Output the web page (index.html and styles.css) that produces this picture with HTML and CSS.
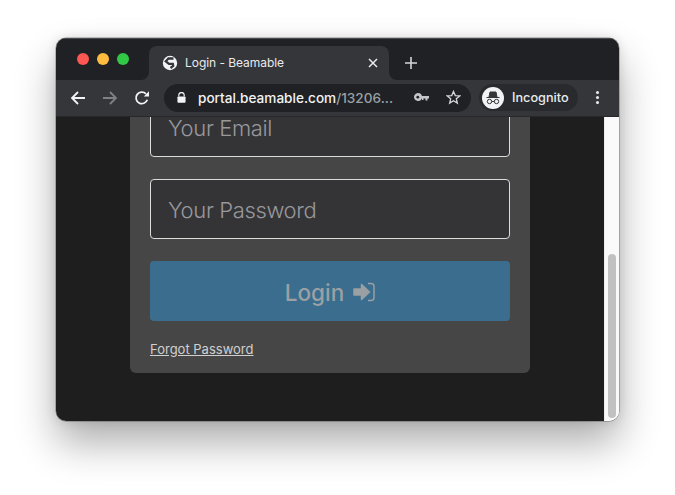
FILE: index.html
```html
<!DOCTYPE html>
<html lang="en">
<head>
<meta charset="utf-8">
<title>Login - Beamable</title>
<link rel="stylesheet" href="styles.css">
</head>
<body>
<div class="window">
  <div class="titlebar">
    <div class="traffic">
      <span class="light red"></span><span class="light yellow"></span><span class="light green"></span>
    </div>
    <div class="tab">
      <svg class="globe" viewBox="0 0 16 16" width="16" height="16"><circle cx="8" cy="8" r="7.200" fill="#f1f3f4"/><path d="M11.500 3.500H6.500L3.800 6.300 7 8.800H10.800L11.200 10.800 8.500 13" stroke="#35363a" stroke-width="2.300" fill="none"/></svg>
      <span class="tab-title">Login - Beamable</span>
      <svg class="tab-close" viewBox="0 0 10 10" width="10" height="10"><path d="M1 1l8 8M9 1l-8 8" stroke="#e8eaed" stroke-width="1.500" fill="none"/></svg>
    </div>
    <svg class="new-tab" viewBox="0 0 12 12" width="12" height="12"><path d="M6 0v12M0 6h12" stroke="#d4d6d9" stroke-width="1.600" fill="none"/></svg>
  </div>
  <div class="toolbar">
    <svg class="nav" viewBox="0 0 16 16" width="16" height="16"><path d="M15 8H2M8 2 2 8l6 6" stroke="#f1f3f4" stroke-width="1.800" fill="none"/></svg>
    <svg class="nav dim" viewBox="0 0 16 16" width="16" height="16"><path d="M1 8h13M8 2l6 6-6 6" stroke="#7f8184" stroke-width="1.800" fill="none"/></svg>
    <svg class="nav" viewBox="0 0 16 16" width="16" height="16"><path d="M13.300 9.800A5.800 5.800 0 1 1 12 3.800" stroke="#f1f3f4" stroke-width="1.800" fill="none"/><path d="M9.800 6.500H15V1.300z" fill="#f1f3f4"/></svg>
    <div class="omnibox">
      <svg class="lock" viewBox="0 0 10 12" width="9" height="11"><path d="M2 5V3.500a3 3 0 0 1 6 0V5" stroke="#f1f3f4" stroke-width="1.300" fill="none"/><rect x="0.500" y="4.800" width="9" height="7" rx="1" fill="#f1f3f4"/></svg>
      <span class="url"><span class="host">portal.beamable.com</span><span class="path">/13206...</span></span>
      <svg class="key" viewBox="0 0 15 9" width="15" height="9"><path d="M4 0a4 4 0 1 1-3.800 5.200 4 4 0 0 1 3.800-5.200zM7 3h8v2.500h-1.500V7.500h-2V5.500H9.500V7H8V5.500H7z" fill="#c4c6c9"/><circle cx="3.800" cy="4.200" r="1.400" fill="#202124"/></svg>
      <svg class="star" viewBox="0 0 16 16" width="15" height="15"><path d="M8 1.500l1.900 4.400 4.700.4-3.600 3.100 1.100 4.600L8 11.500 3.900 14l1.100-4.600L1.400 6.300l4.700-.4z" stroke="#d4d6d9" stroke-width="1.400" fill="none"/></svg>
    </div>
    <div class="profile">
      <span class="avatar">
        <svg viewBox="0 0 20 20" width="20" height="20"><path d="M3.500 9.500h13M6 9l1-5h6l1 5z" stroke="#35363a" stroke-width="1" fill="#35363a"/><circle cx="6.500" cy="13.500" r="2.200" stroke="#35363a" stroke-width="1" fill="none"/><circle cx="13.500" cy="13.500" r="2.200" stroke="#35363a" stroke-width="1" fill="none"/><path d="M8.700 13.500h2.600" stroke="#35363a" stroke-width="1"/></svg>
      </span>
      <span class="profile-name">Incognito</span>
    </div>
    <span class="menu"><i></i><i></i><i></i></span>
  </div>
  <div class="content">
    <main class="page">
      <form class="card">
        <div class="field"><span class="placeholder">Your Email</span></div>
        <div class="field"><span class="placeholder">Your Password</span></div>
        <div class="login">
          <span>Login</span>
          <svg viewBox="0 0 22 20" width="22" height="20"><path d="M1 7h7.500V2.500L16.500 10l-8 7.500V13H1z" fill="#9aa0a3" stroke="#9aa0a3" stroke-width="1.500" stroke-linejoin="round"/><path d="M15 1.500h3a3 3 0 0 1 3 3v11a3 3 0 0 1-3 3h-3" stroke="#9aa0a3" stroke-width="1.500" fill="none"/></svg>
        </div>
        <a class="forgot" href="#">Forgot Password</a>
      </form>
    </main>
    <div class="scrollbar"><div class="thumb"></div></div>
  </div>
</div>
</body>
</html>
```
FILE: styles.css
```css
* { box-sizing: border-box; }
html, body { margin: 0; height: 100%; background: #fff; overflow: hidden; }
body { padding: 38px 0 0 56px; font-family: "Inter", "Liberation Sans", Arial, sans-serif; }

.window {
  width: 563px;
  height: 383px;
  border-radius: 10px;
  overflow: hidden;
  display: flex;
  flex-direction: column;
  box-shadow: 0 22px 40px rgba(0,0,0,.32), 0 0 12px rgba(0,0,0,.12), 0 0 0 .5px rgba(0,0,0,.4);
}
.titlebar {
  height: 42px;
  flex: none;
  background: #202124;
  display: flex;
  align-items: flex-end;
  box-shadow: inset 0 1px 0 #4a4b4e;
}
.traffic { display: flex; gap: 8px; width: 93px; height: 34px; padding: 7px 0 0 21px; }
.light { width: 12px; height: 12px; border-radius: 50%; }
.red { background: #fc5753; }
.yellow { background: #fdbc40; }
.green { background: #33c748; }
.tab {
  width: 240px;
  height: 34px;
  background: #35363a;
  border-radius: 8px 8px 0 0;
  display: flex;
  align-items: center;
  padding: 0 11px 1px 13px;
  position: relative;
}
.tab::before, .tab::after {
  content: "";
  position: absolute;
  bottom: 0;
  width: 8px;
  height: 8px;
  background: #35363a;
}
.tab::before { left: -8px; clip-path: path("M0 8A8 8 0 0 0 8 0V8Z"); }
.tab::after { right: -8px; clip-path: path("M8 8A8 8 0 0 1 0 0V8Z"); }
.globe { flex: none; }
.tab-title { margin-left: 7px; flex: 1; font-size: 12px; letter-spacing: -.05px; color: #e8eaed; }
.new-tab { margin: 0 0 11px 16px; }

.toolbar {
  height: 37px;
  flex: none;
  background: #35363a;
  border-bottom: 1px solid #27282b;
  display: flex;
  align-items: center;
  padding: 0 0 1px 14px;
}
.nav { flex: none; margin-right: 16px; }
.nav + .nav + .nav { margin-right: 14px; }
.omnibox {
  width: 307px;
  height: 28px;
  border-radius: 14px;
  background: #202124;
  display: flex;
  align-items: center;
  padding: 0 10px 0 13px;
}
.lock { flex: none; }
.url { flex: 1; margin-left: 12px; font-size: 13.600px; font-weight: 500; white-space: nowrap; }
.host { color: #f1f3f4; }
.path { color: #9aa0a6; }
.key { margin-right: 17px; }
.profile {
  width: 99px;
  height: 27px;
  margin-left: 8px;
  border-radius: 14px;
  background: #292a2d;
  display: flex;
  align-items: center;
  padding-left: 3px;
}
.avatar {
  width: 22px;
  height: 22px;
  border-radius: 50%;
  background: #f1f3f4;
  display: flex;
  align-items: center;
  justify-content: center;
}
.profile-name { margin-left: 8px; font-size: 12.700px; font-weight: 500; color: #e8eaed; }
.menu { display: flex; flex-direction: column; gap: 2px; margin-left: 18px; }
.menu i { width: 3px; height: 3px; border-radius: 50%; background: #e8eaed; }

.content { flex: 1; min-height: 0; display: flex; }
.page {
  flex: 1;
  min-width: 0;
  overflow: hidden;
  background: #1e1e1e;
  display: flex;
  flex-direction: column;
  justify-content: flex-end;
  padding: 0 0 48px 74px;
}
.card {
  width: 400px;
  flex: none;
  background: #464646;
  border-radius: 0 0 6px 6px;
  padding: 0 20px 16px;
  display: flex;
  flex-direction: column;
}
.field {
  height: 60px;
  flex: none;
  border: 1px solid #dcdcdc;
  border-radius: 4px;
  background: #343436;
  margin-bottom: 22px;
  display: flex;
  align-items: center;
  padding: 2px 0 0 17px;
}
.placeholder { font-size: 22px; font-weight: 300; letter-spacing: -.36px; color: #98989d; }
.login {
  height: 60px;
  flex: none;
  background: #3b6d8f;
  border-radius: 4px;
  display: flex;
  align-items: center;
  justify-content: center;
  gap: 9px;
  font-size: 22.500px;
  font-weight: 500;
  color: #9aa0a3;
  padding: 2px 0 0;
}
.forgot {
  margin-top: 20px;
  font-size: 13px;
  line-height: 16px;
  color: #d0d0d0;
  text-decoration: underline;
}
.scrollbar { width: 15px; flex: none; background: #fafafa; padding: 137px 3px 3px 3px; border-left: 1px solid #ececec; }
.thumb { height: 100%; border-radius: 4px; background: #c1c1c1; }
```
